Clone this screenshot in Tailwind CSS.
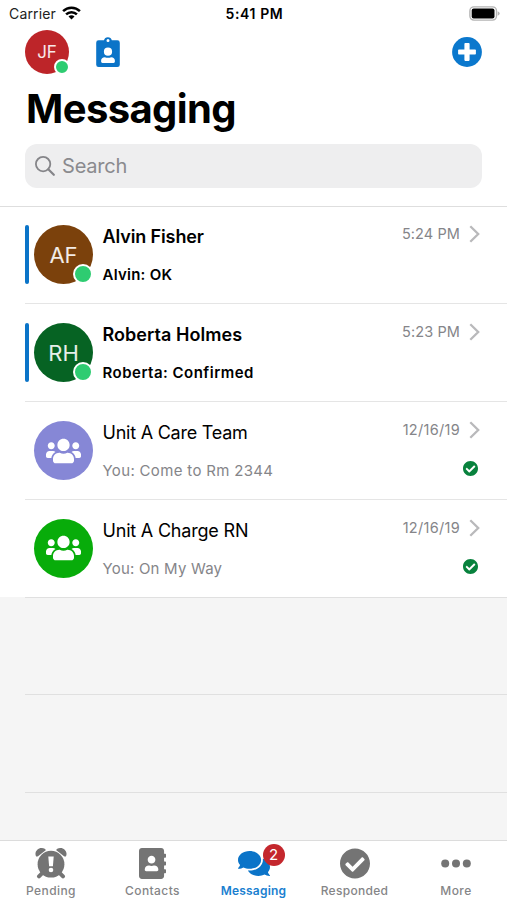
<!DOCTYPE html>
<html lang="en">
<head>
<meta charset="utf-8">
<title>Messaging</title>
<script src="https://cdn.jsdelivr.net/npm/@tailwindcss/browser@4"></script>
</head>
<body class="bg-white">
<svg class="hidden">
  <symbol id="users" viewBox="0 0 640 512"><path d="M96 224c35.3 0 64-28.7 64-64s-28.7-64-64-64-64 28.7-64 64 28.7 64 64 64zm448 0c35.3 0 64-28.7 64-64s-28.7-64-64-64-64 28.7-64 64 28.7 64 64 64zm32 32h-64c-17.6 0-33.5 7.1-45.1 18.6 40.3 22.1 68.9 62 75.1 109.4h66c17.7 0 32-14.3 32-32v-32c0-35.3-28.7-64-64-64zm-256 0c61.9 0 112-50.1 112-112S381.9 32 320 32 208 82.1 208 144s50.1 112 112 112zm76.8 32h-8.3c-20.8 10-43.9 16-68.5 16s-47.6-6-68.5-16h-8.3C179.6 288 128 339.6 128 403.2V432c0 26.5 21.5 48 48 48h288c26.5 0 48-21.5 48-48v-28.8c0-63.6-51.6-115.2-115.2-115.2zm-223.7-13.4C161.5 263.1 145.6 256 128 256H64c-35.3 0-64 28.7-64 64v32c0 17.7 14.3 32 32 32h65.9c6.3-47.4 34.9-87.3 75.2-109.4z"/></symbol>
  <symbol id="check" viewBox="8 8 496 496"><path d="M504 256c0 136.967-111.033 248-248 248S8 392.967 8 256 119.033 8 256 8s248 111.033 248 248zM227.314 387.314l184-184c6.248-6.248 6.248-16.379 0-22.627l-22.627-22.627c-6.248-6.249-16.379-6.249-22.628 0L216 308.118l-70.059-70.059c-6.248-6.248-16.379-6.248-22.628 0l-22.627 22.627c-6.248 6.248-6.248 16.379 0 22.627l104 104c6.249 6.249 16.379 6.249 22.628.001z"/></symbol>
  <symbol id="chevron" viewBox="0 0 11 18"><path d="M1.3 1.3L9.2 9l-7.9 7.7" fill="none" stroke="#b9b9bb" stroke-width="2.3"/></symbol>
</svg>
<div class="flex h-[900px] w-[507px] flex-col overflow-hidden bg-white font-['Inter',sans-serif] whitespace-nowrap text-black">

  <!-- Status bar -->
  <div class="grid h-[28px] shrink-0 grid-cols-3 items-center pr-[7px] pl-[9px] text-[14px] leading-[28px]">
    <div class="flex items-center gap-[6px]"><span class="tracking-[0.15px] text-[#222]">Carrier</span>
      <svg class="mb-[2px] h-[14px] w-[19px]" viewBox="0 0 19 14" fill="none" stroke="#000" stroke-width="2.5"><path d="M1.1 5.2a12 12 0 0 1 16.8 0"/><path d="M4.1 8.4a7.6 7.6 0 0 1 10.8 0"/><path d="M9.5 13.6L6.5 10.6a4.2 4.2 0 0 1 6 0z" fill="#000" stroke="none"/></svg>
    </div>
    <span class="text-center font-semibold tracking-[0.6px]">5:41 PM</span>
    <svg class="mb-[2px] h-[15px] w-[31px] justify-self-end" viewBox="0 0 31 15"><rect x=".9" y=".9" width="26.6" height="13.2" rx="4" fill="#fff" stroke="#b4b4b4" stroke-width="1.4"/><rect x="2.7" y="2.6" width="22.8" height="9.8" rx="2" fill="#000"/><path d="M28.7 5.2q2 .7 2 2.3t-2 2.3z" fill="#b4b4b4"/></svg>
  </div>

  <!-- Account row -->
  <div class="flex h-[50px] shrink-0 items-center pr-[25px] pl-[25px]">
    <div class="relative mb-[2px] flex size-[44px] items-center justify-center rounded-full bg-[#bd2529] pt-px text-[17px] text-white/90">JF
      <span class="absolute -right-px bottom-[-1px] size-[16px] rounded-full border-[2.5px] border-white bg-[#2ecc71]"></span>
    </div>
    <svg class="mt-0 mb-[2px] ml-[27px] h-[32px] w-[24px]" viewBox="0 0 24 32"><path fill="#0b74c8" fill-rule="evenodd" d="M2.6 4.3H8a4 4 0 0 1 7.8 0h5.6a2.4 2.4 0 0 1 2.4 2.4v22a2.4 2.4 0 0 1-2.4 2.4H2.6a2.4 2.4 0 0 1-2.4-2.4v-22a2.4 2.4 0 0 1 2.4-2.4zM12 2.9a1.5 1.5 0 1 0 0 3 1.5 1.5 0 0 0 0-3zm0 8.7a4.1 4.1 0 1 0 0 8.2 4.1 4.1 0 0 0 0-8.2zM8.8 21.2c-2.2 0-3.7 1.5-3.7 3.5v.9q0 1.3 1.3 1.3h11.2q1.3 0 1.3-1.3v-.9c0-2-1.5-3.5-3.7-3.5q-3.2 1.2-6.4 0z"/></svg>
    <svg class="mb-[2px] ml-auto size-[30px]" viewBox="0 0 30 30"><circle cx="15" cy="15" r="14.9" fill="#0b78cd"/><g fill="#fff"><rect x="12.4" y="6.1" width="5.2" height="17.8" rx=".8"/><rect x="6.1" y="12.4" width="17.8" height="5.2" rx=".8"/></g></svg>
  </div>

  <h1 class="h-[66px] shrink-0 pl-[26px] text-[40px] leading-[62px] font-bold tracking-[-0.6px]">Messaging</h1>

  <!-- Search -->
  <div class="mr-[25px] ml-[25px] flex h-[44px] shrink-0 items-center rounded-[12px] bg-[#eeeeef] pl-[10px] text-[20px] text-[#8a8a8e]">
    <svg class="size-[20px]" viewBox="0 0 20 20" fill="none" stroke="#858589" stroke-width="1.8"><circle cx="8.1" cy="8.1" r="7.2"/><path d="M13.3 13.3l5.5 5.5" stroke-width="2.2" stroke-linecap="round"/></svg>
    <span class="ml-[7px] pb-px tracking-[-0.2px]">Search</span>
  </div>

  <!-- Conversations -->
  <div class="mt-[18px] flex h-[634px] shrink-0 flex-col bg-[#f5f5f5]">
    <div class="h-px shrink-0 bg-[#dedede]"></div>
    <div class="h-[97px] shrink-0 bg-white pl-[25px]">
      <div class="flex h-full border-b border-[#e5e5e5] pt-[18px]">
        <div class="mr-[5px] h-[59px] w-[4px] rounded-sm bg-[#0b74c8]"></div>
        <div class="relative flex size-[59px] items-center justify-center rounded-full bg-[#7b410c] pt-px text-[22px] text-white/90">AF<span class="absolute right-0 bottom-0 size-[20px] rounded-full border-2 border-white bg-[#2ecc71]"></span></div>
        <div class="ml-[9.500px] flex flex-col font-semibold"><span class="h-[38px] text-[18px] leading-[24px] tracking-[-0.12px]">Alvin Fisher</span><span class="text-[15px] leading-[23px] tracking-[0.25px]">Alvin: OK</span></div>
        <div class="mr-[27px] ml-auto flex h-[18px] items-center gap-[9px] text-[14.5px] text-[#858589]"><span class="tracking-[0.1px]">5:24 PM</span><svg class="h-[18px] w-[11px]"><use href="#chevron"/></svg></div>
      </div>
    </div>
    <div class="h-[98px] shrink-0 bg-white pl-[25px]">
      <div class="flex h-full border-b border-[#e5e5e5] pt-[19px]">
        <div class="mr-[5px] h-[59px] w-[4px] rounded-sm bg-[#0b74c8]"></div>
        <div class="relative flex size-[59px] items-center justify-center rounded-full bg-[#066323] pt-px text-[22px] text-white/90">RH<span class="absolute right-0 bottom-0 size-[20px] rounded-full border-2 border-white bg-[#2ecc71]"></span></div>
        <div class="ml-[9.500px] flex flex-col font-semibold"><span class="h-[38px] text-[18px] leading-[23px] tracking-[0.05px]">Roberta Holmes</span><span class="text-[15px] leading-[23px] tracking-[0.48px]">Roberta: Confirmed</span></div>
        <div class="mr-[27px] ml-auto flex h-[18px] items-center gap-[9px] text-[14.5px] text-[#858589]"><span class="tracking-[0.1px]">5:23 PM</span><svg class="h-[18px] w-[11px]"><use href="#chevron"/></svg></div>
      </div>
    </div>
    <div class="h-[97.500px] shrink-0 bg-white pl-[25px]">
      <div class="flex h-full border-b border-[#e5e5e5] pt-[19px] pl-[9px]">
        <div class="flex size-[59px] items-center justify-center rounded-full bg-[#8687d6] text-white"><svg class="h-[28px] w-[35px] fill-white"><use href="#users"/></svg></div>
        <div class="ml-[9.500px] flex flex-col"><span class="h-[38px] text-[18px] leading-[23px] tracking-[-0.24px]">Unit A Care Team</span><span class="text-[15px] leading-[23px] tracking-[0.33px] text-[#858589]">You: Come to Rm 2344</span></div>
        <div class="mr-[27px] ml-auto flex flex-col items-end"><div class="flex h-[18px] items-center gap-[9px] text-[14.5px] text-[#858589]"><span class="tracking-[0.3px]">12/16/19</span><svg class="h-[18px] w-[11px]"><use href="#chevron"/></svg></div><svg class="mt-[22px] mr-[2px] size-[15px] fill-[#08823d]"><use href="#check"/></svg></div>
      </div>
    </div>
    <div class="h-[97.500px] shrink-0 bg-white pl-[25px]">
      <div class="flex h-full pt-[19px] pl-[9px]">
        <div class="flex size-[59px] items-center justify-center rounded-full bg-[#08ac0a] text-white"><svg class="h-[28px] w-[35px] fill-white"><use href="#users"/></svg></div>
        <div class="ml-[9.500px] flex flex-col"><span class="h-[38px] text-[18px] leading-[23px] tracking-[-0.2px]">Unit A Charge RN</span><span class="text-[15px] leading-[23px] tracking-[0.2px] text-[#858589]">You: On My Way</span></div>
        <div class="mr-[27px] ml-auto flex flex-col items-end"><div class="flex h-[18px] items-center gap-[9px] text-[14.5px] text-[#858589]"><span class="tracking-[0.3px]">12/16/19</span><svg class="h-[18px] w-[11px]"><use href="#chevron"/></svg></div><svg class="mt-[22px] mr-[2px] size-[15px] fill-[#08823d]"><use href="#check"/></svg></div>
      </div>
    </div>
    <div class="ml-[25px] h-[98px] shrink-0 border-y border-[#e0e0e0]"></div>
    <div class="ml-[25px] h-[98px] shrink-0 border-b border-[#e0e0e0]"></div>
  </div>

  <!-- Tab bar -->
  <div class="flex h-[60px] shrink-0 border-t border-[#dcdcdc] bg-white text-[12px] font-medium text-[#858587]">
    <div class="flex w-[102px] flex-col items-center pt-[6px]">
      <svg class="h-[32px] w-[32px]" viewBox="0 0 32 32"><g fill="#747474"><circle cx="16" cy="17.2" r="13.4"/><path d="M.8 8.7C-.7 4.7 3 .7 7 1q2.6.1 4 2L3 9.3q-1.8.8-2.2-.6zM31.2 8.7C32.7 4.7 29 .7 25 1q-2.6.1-4 2l8 6.3q1.8.8 2.2-.6z"/></g><path d="M7 26.3l-3 3M25 26.3l3 3" stroke="#747474" stroke-width="4" stroke-linecap="round"/><path d="M13.300 9.500h5.400l-.8 9.700h-3.800z" fill="#fff"/><circle cx="16" cy="23" r="2.300" fill="#fff"/></svg>
      <span class="mt-[4px] leading-[16px] tracking-[0.4px]">Pending</span>
    </div>
    <div class="flex w-[101px] flex-col items-center pt-[7px]">
      <svg class="h-[31px] w-[27px] fill-[#747474]" viewBox="0 0 448 512" preserveAspectRatio="none"><path d="M436 160c6.600 0 12-5.400 12-12v-40c0-6.600-5.400-12-12-12h-20V48c0-26.500-21.500-48-48-48H48C21.500 0 0 21.500 0 48v416c0 26.500 21.500 48 48 48h320c26.500 0 48-21.500 48-48v-48h20c6.600 0 12-5.400 12-12v-40c0-6.600-5.400-12-12-12h-20v-64h20c6.600 0 12-5.400 12-12v-40c0-6.600-5.400-12-12-12h-20v-64h20zm-228-32c35.300 0 64 28.700 64 64s-28.700 64-64 64-64-28.700-64-64 28.700-64 64-64zm112 236.800c0 10.600-10 19.200-22.400 19.200H118.400C106 384 96 375.400 96 364.800v-19.200c0-31.800 30.100-57.600 67.200-57.600h5c12.300 5.100 25.700 8 39.800 8s27.600-2.900 39.800-8h5c37.100 0 67.200 25.800 67.200 57.600v19.200z"/></svg>
      <span class="mt-[4px] leading-[16px] tracking-[0.4px]">Contacts</span>
    </div>
    <div class="flex w-[101px] flex-col items-center pt-[8px] text-[#1a80d0]">
      <div class="relative h-[30px] w-[32px]"><svg class="h-[29px] w-[32px] fill-[#0b74c8]" viewBox="0 0 576 512"><path d="M416 192c0-88.400-93.100-160-208-160S0 103.600 0 192c0 34.300 14.100 65.900 38 92-13.400 30.200-35.500 54.200-35.800 54.500-2.200 2.300-2.800 5.700-1.500 8.700S4.800 352 8 352c36.600 0 66.900-12.300 88.700-25 32.200 15.700 70.300 25 111.300 25 114.900 0 208-71.600 208-160zm122 220c23.900-26 38-57.700 38-92 0-66.900-53.500-124.200-129.300-148.100.9 6.600 1.300 13.300 1.300 20.100 0 105.900-107.700 192-240 192-10.800 0-21.300-.8-31.700-1.900C207.800 439.600 281.800 480 368 480c41 0 79.100-9.200 111.300-25 21.800 12.700 52.100 25 88.700 25 3.200 0 6.100-1.900 7.300-4.800 1.300-2.900.7-6.300-1.500-8.700-.3-.3-22.400-24.200-35.800-54.500z"/></svg>
        <span class="absolute -top-[5px] left-[25px] flex size-[22px] items-center justify-center rounded-full bg-[#c4272d] text-[15px] font-normal text-white">2</span></div>
      <span class="mt-[4px] leading-[16px] font-semibold tracking-[0.2px]">Messaging</span>
    </div>
    <div class="flex w-[101px] flex-col items-center pt-[7px]">
      <svg class="h-[31px] w-[30px] fill-[#747474]"><use href="#check"/></svg>
      <span class="mt-[4px] leading-[16px] tracking-[0.3px]">Responded</span>
    </div>
    <div class="flex w-[102px] flex-col items-center pt-[7px]">
      <svg class="h-[31px] w-[30px] fill-[#747474]" viewBox="0 0 30 31"><circle cx="4.2" cy="15.5" r="4"/><circle cx="15" cy="15.5" r="4"/><circle cx="25.8" cy="15.5" r="4"/></svg>
      <span class="mt-[4px] leading-[16px] tracking-[0.4px]">More</span>
    </div>
  </div>
</div>
</body>
</html>
